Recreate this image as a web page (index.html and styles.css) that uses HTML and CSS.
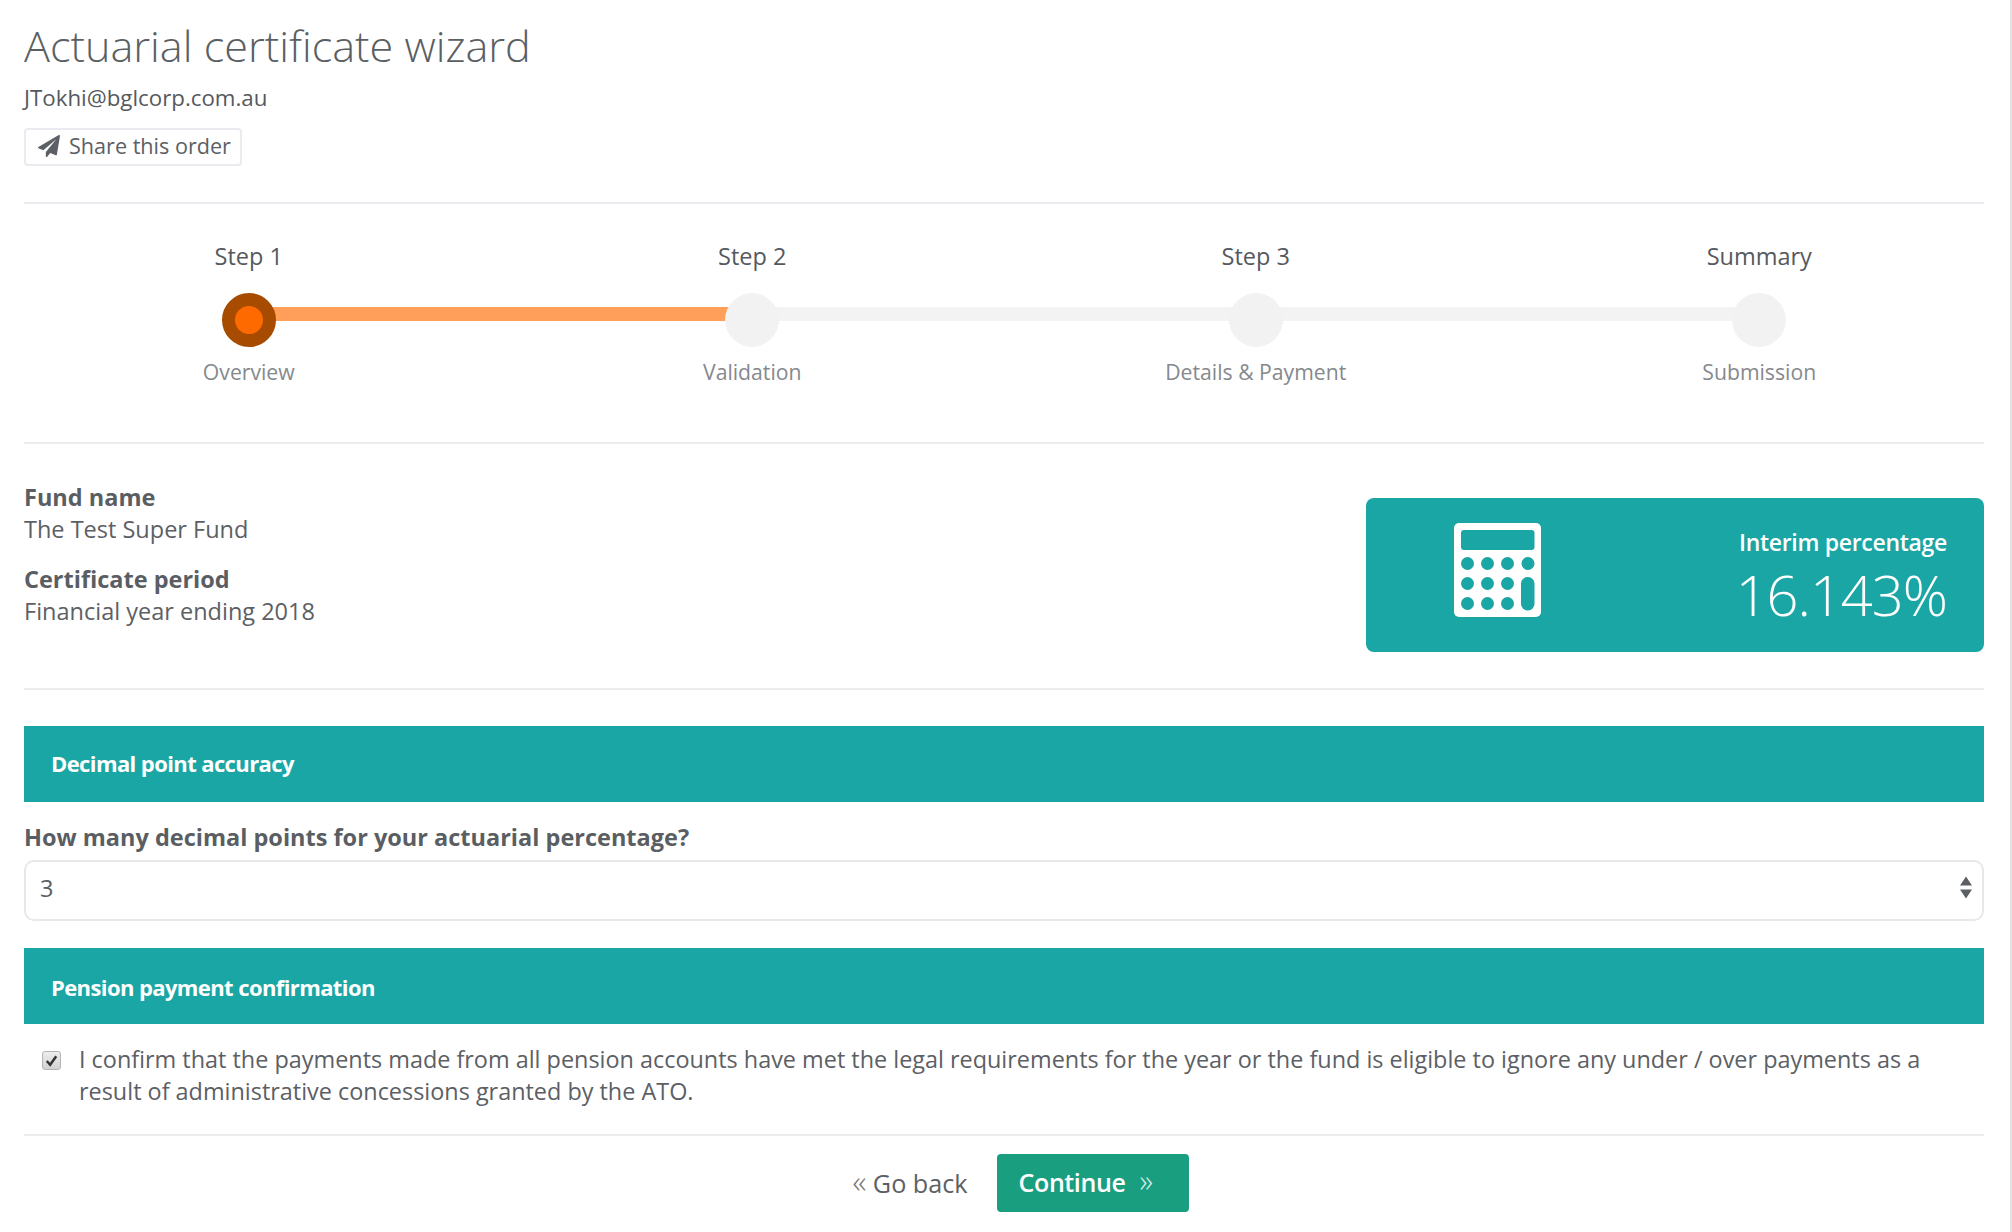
FILE: index.html
```html
<!DOCTYPE html>
<html lang="en">
<head>
<meta charset="utf-8">
<title>Actuarial certificate wizard</title>
<link rel="stylesheet" href="styles.css">
</head>
<body>
<div class="page">
  <header class="head">
    <h1 class="title">Actuarial certificate wizard</h1>
    <div class="email">JTokhi@bglcorp.com.au</div>
    <button class="share" type="button">
      <svg class="plane" viewBox="0 0 1792 1792"><path d="M1764 11q33 24 27 64l-256 1536q-5 29-32 45-14 8-31 8-11 0-24-5l-453-185-242 295q-18 23-49 23-13 0-22-4-19-7-30.5-23.5t-11.5-36.5v-349l864-1059-1069 925-395-162q-37-14-40-55-2-40 32-59l1664-960q15-9 32-9 20 0 36 11z"/></svg>
      Share this order
    </button>
  </header>

  <section class="wizard">
    <div class="step active">
      <div class="step-name">Step 1</div>
      <div class="track"><span class="bar done"></span><span class="dot"></span></div>
      <div class="step-info">Overview</div>
    </div>
    <div class="step">
      <div class="step-name">Step 2</div>
      <div class="track"><span class="bar"></span><span class="dot"></span></div>
      <div class="step-info">Validation</div>
    </div>
    <div class="step">
      <div class="step-name">Step 3</div>
      <div class="track"><span class="bar"></span><span class="dot"></span></div>
      <div class="step-info">Details &amp; Payment</div>
    </div>
    <div class="step last">
      <div class="step-name">Summary</div>
      <div class="track"><span class="dot"></span></div>
      <div class="step-info">Submission</div>
    </div>
  </section>

  <section class="summary">
    <dl class="facts">
      <dt>Fund name</dt>
      <dd>The Test Super Fund</dd>
      <dt>Certificate period</dt>
      <dd>Financial year ending 2018</dd>
    </dl>
    <div class="stat">
      <svg class="calc" viewBox="0 0 87 94">
        <rect width="87" height="94" rx="5" fill="#fff"/>
        <g fill="#1aa6a4">
          <rect x="7" y="7" width="73.5" height="20" rx="3"/>
          <circle cx="13.5" cy="40.5" r="6.5"/><circle cx="33.5" cy="40.5" r="6.5"/><circle cx="53.5" cy="40.5" r="6.5"/><circle cx="74" cy="40.5" r="6.5"/>
          <circle cx="13.5" cy="60.5" r="6.5"/><circle cx="33.5" cy="60.5" r="6.5"/><circle cx="53.5" cy="60.5" r="6.5"/>
          <circle cx="13.5" cy="80.5" r="6.5"/><circle cx="33.5" cy="80.5" r="6.5"/><circle cx="53.5" cy="80.5" r="6.5"/>
          <rect x="67" y="54" width="13.5" height="33.5" rx="6.5"/>
        </g>
      </svg>
      <div class="stat-text">
        <div class="stat-label">Interim percentage</div>
        <div class="stat-value">16.143%</div>
      </div>
    </div>
  </section>

  <h2 class="banner first">Decimal point accuracy</h2>
  <label class="field-label" for="decimals">How many decimal points for your actuarial percentage?</label>
  <div class="select-wrap">
    <select id="decimals" class="select">
      <option>3</option>
    </select>
    <svg class="select-arrows" viewBox="0 0 14 24"><path d="M7 1l6 9H1zM7 23l-6-9h12z"/></svg>
  </div>

  <h2 class="banner second">Pension payment confirmation</h2>
  <div class="confirm">
    <span class="check"><svg viewBox="0 0 18 18"><path d="M4 9.5l3.6 4L14 4.5" /></svg></span>
    <p class="confirm-text">I confirm that the payments made from all pension accounts have met the legal requirements for the year or the fund is eligible to ignore any under / over payments as a result of administrative concessions granted by the ATO.</p>
  </div>

  <footer class="actions">
    <a class="back"><span class="quote">«</span> Go back</a>
    <button class="continue" type="button">Continue <span class="quote">»</span></button>
  </footer>
</div>
</body>
</html>
```
FILE: styles.css
```css
* { box-sizing: border-box; }
html, body { margin: 0; padding: 0; }
body {
  background: #fff;
  color: #5c6065;
  font-family: "Open Sans", "Liberation Sans", sans-serif;
  font-size: 23.5px;
  line-height: 32px;
}
.page {
  width: 2012px;
  height: 1232px;
  padding: 0 26px 0 24px;
  border-right: 2px solid #e2e2e2;
  overflow: hidden;
}
.head {
  height: 204px;
  padding-top: 18px;
  border-bottom: 2px solid #e9ebee;
}
.title {
  margin: 0;
  font-size: 43.2px;
  line-height: 56px;
  font-weight: 300;
  color: #5a5f64;
}
.email {
  margin-top: 10px;
  font-size: 22.3px;
  line-height: 28px;
  font-weight: 500;
  color: #55595e;
}
.share {
  display: flex;
  align-items: center;
  gap: 9px;
  margin-top: 16px;
  width: 218px;
  height: 38px;
  padding: 0 0 2px 12px;
  background: #fff;
  border: 2px solid #e9ebf0;
  border-radius: 4px;
  color: #5c6065;
  font: 400 21.6px/28px "Open Sans", sans-serif;
}
.plane { width: 22px; height: 22px; fill: #5c6065; }

.wizard {
  display: grid;
  grid-template-columns: repeat(4, 503.5px);
  margin-left: -27px;
  height: 238px;
  padding-top: 36px;
}
.step { text-align: center; }
.step-name { font-size: 23.5px; line-height: 32px; color: #55595e; }
.track { position: relative; height: 54px; margin-top: 21px; }
.dot {
  position: absolute;
  left: calc(50% - 27px);
  top: 0;
  width: 54px;
  height: 54px;
  border-radius: 50%;
  background: #f2f2f2;
}
.bar {
  position: absolute;
  left: 50%;
  top: 14px;
  width: 100%;
  height: 14px;
  background: #f3f3f3;
}
.bar.done { background: #ff9f5a; }
.active .dot { background: #ff6a00; border: 13px solid #a64b00; }
.step-info { margin-top: 9px; font-size: 21.2px; line-height: 32px; color: #85898d; }

.summary {
  display: flex;
  justify-content: space-between;
  align-items: flex-start;
  height: 248px;
  border-top: 2px solid #ececec;
  border-bottom: 2px solid #ececec;
}
.facts { margin: 0; padding-top: 37px; }
.facts dt { font-weight: 700; color: #5a5e63; }
.facts dd { margin: 0 0 18px; }
.stat {
  display: flex;
  justify-content: space-between;
  align-items: flex-start;
  width: 618px;
  height: 154px;
  margin-top: 54px;
  padding: 25px 37px 0 88px;
  border-radius: 8px;
  background: #1aa6a4;
  color: #fff;
}
.calc { width: 87px; height: 94px; display: block; }
.stat-text { text-align: right; }
.stat-label { font-size: 23px; line-height: 32px; font-weight: 600; letter-spacing: -0.3px; margin-top: 3px; }
.stat-value { font-size: 56px; line-height: 70px; font-weight: 300; letter-spacing: -1px; margin-top: 1px; }

.banner {
  margin: 0;
  height: 76px;
  padding-left: 27px;
  background: #1aa6a4;
  color: #fff;
  font-size: 22px;
  line-height: 74px;
  font-weight: 700;
  letter-spacing: -0.6px;
}
.banner.first { margin-top: 36px; }
.banner.second { margin-top: 27px; line-height: 78px; }
.field-label {
  display: block;
  margin-top: 19px;
  height: 39px;
  font-weight: 700;
  color: #5a5e63;
}
.select-wrap { position: relative; }
.select {
  display: block;
  width: 100%;
  height: 61px;
  padding: 0 0 6px 14px;
  appearance: none;
  background: #fff;
  border: 2px solid #e8e8e8;
  border-radius: 10px;
  color: #5c6065;
  font: 400 23.5px/32px "Open Sans", sans-serif;
}
.select-arrows {
  position: absolute;
  right: 11px;
  top: 15px;
  width: 14px;
  height: 25px;
  fill: #5c6065;
}
.confirm {
  display: flex;
  align-items: flex-start;
  gap: 18px;
  height: 112px;
  padding: 19px 40px 0 18px;
  border-bottom: 2px solid #ececec;
}
.check {
  flex: none;
  width: 19px;
  height: 19px;
  margin-top: 8px;
  border: 1px solid #b5b5b5;
  border-radius: 3px;
  background: linear-gradient(#ededed, #d2d2d2);
}
.check svg { display: block; width: 17px; height: 17px; fill: none; stroke: #333; stroke-width: 2.6; }
.confirm-text { margin: 0; font-size: 23.42px; }
.actions {
  display: flex;
  justify-content: center;
  align-items: flex-start;
  gap: 29px;
  height: 76px;
  margin-top: 18px;
}
.back { font-size: 25.2px; line-height: 58px; margin-left: 33px; color: #5c6065; }
.back .quote { font-size: 32px; font-weight: 300; line-height: 32px; }
.quote { color: #777; }
.continue {
  width: 192px;
  height: 58px;
  padding: 0 0 4px 22px;
  border: 0;
  border-radius: 4px;
  background: #1a9e80;
  color: #fff;
  text-align: left;
  font: 600 25px/32px "Open Sans", sans-serif;
  letter-spacing: -0.4px;
}
.continue .quote { color: #d5efe8; font-weight: 300; font-size: 31px; margin-left: 8px; }
```
